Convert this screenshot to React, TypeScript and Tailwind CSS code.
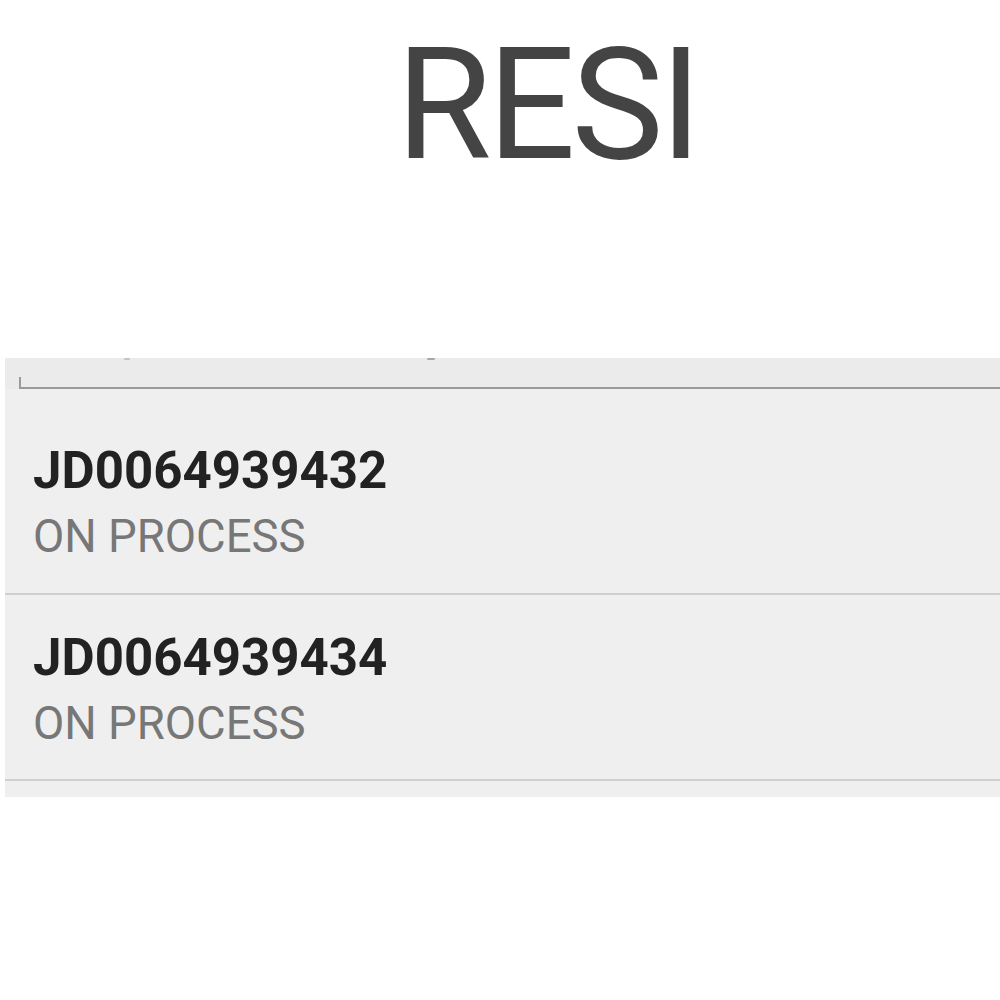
export default function App() {
  const rows = [
    { id: "JD0064939432", status: "ON PROCESS", pt: "pt-[56px]" },
    { id: "JD0064939434", status: "ON PROCESS", pt: "pt-[37px]" },
  ];
  return (
    <div className="w-[1000px] h-[1000px] bg-white overflow-hidden" style={{ fontFamily: "Roboto, sans-serif" }}>
      <div className="pt-[28px] h-[358px]">
        <div className="pl-[396px] text-[155px] leading-none tracking-[-4px] text-[#444444]">RESI</div>
      </div>
      <div className="ml-[5px] w-[995px] bg-[#efefef] pb-[16px]">
        <div className="flex flex-col h-[31px] bg-[#ebebeb]">
          <div className="flex h-[2px]">
            <div className="ml-[119px] w-[6px] h-[2px] bg-[#c4c4c4] rounded-full" />
            <div className="ml-[297px] w-[8px] h-[2px] bg-[#a8a8a8] rounded-full" />
          </div>
          <div className="ml-[14px] mt-[17px] h-[12px] border-l-2 border-b-2 border-[#9a9a9a]" />
        </div>
        {rows.map((r) => (
          <div key={r.id} className={`${r.pt} pb-[33px] pl-[28px] border-b-2 border-[#cfcfcf]`}>
            <div className="text-[51px] leading-none font-bold text-[#222222]">{r.id}</div>
            <div className="mt-[18px] text-[45.5px] leading-none text-[#777777]">{r.status}</div>
          </div>
        ))}
      </div>
    </div>
  );
}
